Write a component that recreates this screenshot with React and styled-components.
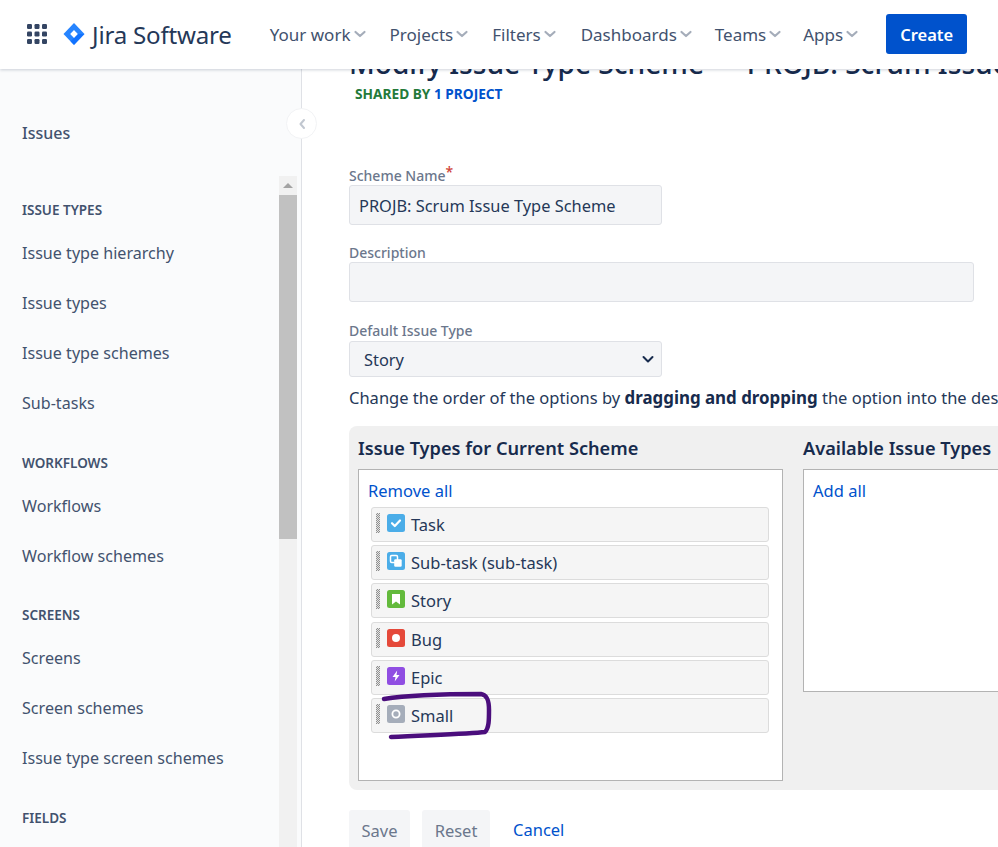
import React from "react";
import styled, { createGlobalStyle } from "styled-components";

const GlobalStyle = createGlobalStyle`
  html, body {
    margin: 0;
    padding: 0;
    height: 100%;
    overflow: hidden;
    background: #fff;
    font-family: "Noto Sans", "Open Sans", sans-serif;
    color: #172b4d;
  }
  * {
    box-sizing: border-box;
  }
`;

const Page = styled.div`
  width: 998px;
  height: 847px;
  display: flex;
  flex-direction: column;
  overflow: hidden;
`;

const Header = styled.header`
  position: relative;
  z-index: 2;
  flex: 0 0 69px;
  display: flex;
  align-items: center;
  padding: 0 0 1px 27px;
  background: #fff;
  box-shadow: 0 1px 3px rgba(9, 30, 66, 0.2);
`;

const Logo = styled.div`
  display: flex;
  align-items: center;
  margin-left: 16px;
  margin-right: 38px;
  gap: 7px;
`;

const LogoText = styled.span`
  font-size: 24.1px;
  color: #253858;
  letter-spacing: -0.2px;
`;

const NavItem = styled.div`
  display: flex;
  align-items: center;
  gap: 1px;
  margin-right: ${(p) => p.$gap}px;
  font-size: 17px;
  color: #42526e;
  white-space: nowrap;
`;

const CreateButton = styled.button`
  width: 81px;
  height: 40px;
  border: none;
  border-radius: 3px;
  background: #0052cc;
  color: #fff;
  font: 600 16.5px "Noto Sans", sans-serif;
`;

const Body = styled.div`
  flex: 1;
  display: flex;
  min-height: 0;
`;

const Sidebar = styled.aside`
  position: relative;
  flex: 0 0 302px;
  background: #fafbfc;
  border-right: 1px solid #dfe1e6;
  display: flex;
  flex-direction: column;
`;

const SidebarTitle = styled.div`
  flex: 0 0 107px;
  padding: 52px 0 0 22px;
  font-size: 16px;
  line-height: 24px;
  font-weight: 500;
  color: #42526e;
`;

const CollapseButton = styled.div`
  position: absolute;
  top: 39px;
  right: -16px;
  width: 31px;
  height: 31px;
  border-radius: 50%;
  background: #fff;
  border: 1px solid #f2f3f5;
  display: flex;
  align-items: center;
  justify-content: center;
  z-index: 1;
`;

const SideScroll = styled.div`
  flex: 1;
  display: flex;
  min-height: 0;
  padding-right: 4px;
`;

const NavList = styled.div`
  flex: 1;
  padding-left: 22px;
  overflow: hidden;
`;

const SectionTitle = styled.div`
  font-size: 13.5px;
  line-height: 18px;
  font-weight: 600;
  color: #42526e;
  margin-top: ${(p) => p.$top}px;
  margin-bottom: 22px;
`;

const SideLink = styled.div`
  font-size: 16.1px;
  line-height: 24px;
  height: 50px;
  color: #42526e;
`;

const ScrollTrack = styled.div`
  flex: 0 0 18px;
  background: #f1f1f1;
  display: flex;
  flex-direction: column;
  align-items: center;
`;

const ScrollArrow = styled.div`
  margin-top: 7px;
  width: 0;
  height: 0;
  border-left: 5px solid transparent;
  border-right: 5px solid transparent;
  border-bottom: 5px solid #a3a3a3;
`;

const ScrollThumb = styled.div`
  margin-top: 7px;
  width: 100%;
  height: 344px;
  background: #c1c1c1;
`;

const Main = styled.main`
  flex: 1;
  min-width: 0;
  padding-left: 47px;
  overflow: hidden;
`;

const Title = styled.h1`
  margin: -24px 0 0;
  font-size: 28.1px;
  line-height: 36px;
  font-weight: 500;
  color: #172b4d;
  white-space: pre;
`;

const SharedBy = styled.div`
  margin: 4px 0 0 6px;
  font-size: 13.7px;
  line-height: 18px;
  font-weight: 700;
  color: #247a3a;
`;

const SharedLink = styled.span`
  color: #0052cc;
`;

const Field = styled.div`
  margin-top: ${(p) => p.$top}px;
`;

const Label = styled.label`
  display: block;
  font-size: 14px;
  line-height: 16px;
  font-weight: 500;
  color: #6b778c;
  margin-bottom: ${(p) => p.$bottom}px;
`;

const Required = styled.span`
  color: #d04437;
  font-size: 14px;
  line-height: 0;
  vertical-align: 4px;
`;

const InputBox = styled.div`
  width: ${(p) => p.$width}px;
  height: ${(p) => p.$height}px;
  background: #f4f5f7;
  border: 1px solid #dfe1e6;
  border-radius: 3px;
  font-size: 16.4px;
  display: flex;
  align-items: center;
  justify-content: space-between;
  padding: 0 ${(p) => p.$right || 9}px 0 ${(p) => p.$left || 9}px;
  color: #253858;
`;

const HelpText = styled.p`
  margin: 9px 0 0;
  font-size: 16.5px;
  line-height: 24px;
  color: #253858;
  white-space: nowrap;
`;

const Strong = styled.b`
  font-size: 16.9px;
  color: #172b4d;
`;

const SchemePanel = styled.div`
  width: 680px;
  height: 364px;
  margin-top: 16px;
  padding: 9px;
  background: #f0f0f0;
  border-radius: 8px;
  display: flex;
  gap: 20px;
`;

const Column = styled.div`
  flex: 0 0 ${(p) => p.$width}px;
`;

const ColumnTitle = styled.h3`
  margin: 0 0 7px;
  font-size: 18.2px;
  line-height: 27px;
  font-weight: 600;
  color: #172b4d;
  white-space: nowrap;
`;

const DropBox = styled.div`
  position: relative;
  height: ${(p) => p.$height}px;
  background: #fff;
  border: 1px solid #b3b3b3;
  padding: 9px 13px 0 9px;
`;

const BoxLink = styled.a`
  display: block;
  font-size: 16.5px;
  line-height: 24px;
  color: #0052cc;
`;

const OptionList = styled.div`
  display: flex;
  flex-direction: column;
  gap: 3.2px;
  margin: 4px 0 0 3px;
`;

const Option = styled.div`
  height: 35px;
  display: flex;
  background: #f5f5f5;
  border: 1px solid #dcdcdc;
  border-radius: 3px;
  padding: 3px 0 0 4px;
  font-size: 16.5px;
  line-height: 28px;
  color: #253858;
`;

const Grip = styled.span`
  flex: 0 0 4px;
  height: 20px;
  margin: 2px 7px 0 0;
  background: repeating-conic-gradient(#8f8f8f 0 25%, #e4e4e4 0 50%) 0 0 / 2px 2px;
`;

const OptionIcon = styled.span`
  flex: 0 0 18px;
  height: 18px;
  margin: 3px 6px 0 0;
  display: flex;
`;

const Annotation = styled.svg`
  position: absolute;
  left: 0;
  top: 0;
  pointer-events: none;
`;

const Actions = styled.div`
  display: flex;
  align-items: flex-start;
  margin-top: 20px;
`;

const ActionButton = styled.div`
  width: ${(p) => p.$width}px;
  height: 40px;
  margin-right: 12px;
  background: #f4f5f7;
  border-radius: 3px;
  color: #6b778c;
  font-size: 16.5px;
  display: flex;
  align-items: center;
  justify-content: center;
`;

const CancelLink = styled.a`
  margin-left: 11px;
  font-size: 16.5px;
  line-height: 40px;
  color: #0052cc;
`;

const Chevron = () => (
  <svg width="16" height="16" viewBox="0 0 16 16" fill="none">
    <path d="M3.5 6l4.5 4 4.5-4" stroke="#a5adba" strokeWidth="2.2" strokeLinecap="round" strokeLinejoin="round" />
  </svg>
);

const AppGrid = () => (
  <svg width="20" height="20" viewBox="0 0 20 20" fill="#344563">
    {[0, 7.5, 15].map((y) =>
      [0, 7.5, 15].map((x) => <rect key={`${x}-${y}`} x={x} y={y} width="5" height="5" rx="1.2" />)
    )}
  </svg>
);

const JiraMark = () => (
  <svg width="22" height="24" viewBox="0 0 22 24">
    <path d="M11 1L21.5 12 11 23 .5 12z" fill="#2684ff" />
    <path d="M14.8 12L21.5 12 11 23 7.5 19.4z" fill="#0065ff" opacity="0.55" />
    <path d="M11 8l3.8 4-3.8 4-3.8-4z" fill="#fff" />
  </svg>
);

const IssueIcon = ({ bg, children }) => (
  <svg width="18" height="18" viewBox="0 0 18 18">
    <rect width="18" height="18" rx="2.5" fill={bg} />
    {children}
  </svg>
);

const issueTypes = [
  {
    name: "Task",
    icon: (
      <IssueIcon bg="#4bade8">
        <path d="M5 9.2l2.8 2.8L13 6.5" fill="none" stroke="#fff" strokeWidth="2.2" strokeLinecap="round" strokeLinejoin="round" />
      </IssueIcon>
    ),
  },
  {
    name: "Sub-task (sub-task)",
    icon: (
      <IssueIcon bg="#4bade8">
        <rect x="3.5" y="3.5" width="7" height="7" rx="1.2" fill="none" stroke="#fff" strokeWidth="1.5" />
        <rect x="7.2" y="7.2" width="7.5" height="7.5" rx="1.2" fill="#fff" />
      </IssueIcon>
    ),
  },
  {
    name: "Story",
    icon: (
      <IssueIcon bg="#63ba3c">
        <path d="M5 4h8v10.5l-4-3-4 3z" fill="#fff" />
      </IssueIcon>
    ),
  },
  {
    name: "Bug",
    icon: (
      <IssueIcon bg="#e5493a">
        <circle cx="9" cy="9" r="4" fill="#fff" />
      </IssueIcon>
    ),
  },
  {
    name: "Epic",
    icon: (
      <IssueIcon bg="#904ee2">
        <path d="M10.2 3.5L5.5 10h3l-.8 4.6L12.5 8h-3z" fill="#fff" />
      </IssueIcon>
    ),
  },
  {
    name: "Small",
    icon: (
      <IssueIcon bg="#a5adba">
        <circle cx="9" cy="9" r="3.6" fill="none" stroke="#fff" strokeWidth="1.8" />
      </IssueIcon>
    ),
  },
];

const navItems = [
  { label: "Your work", gap: 22 },
  { label: "Projects", gap: 22 },
  { label: "Filters", gap: 23 },
  { label: "Dashboards", gap: 21 },
  { label: "Teams", gap: 20 },
  { label: "Apps", gap: 26 },
];

const sideSections = [
  { title: "ISSUE TYPES", top: 25, links: ["Issue type hierarchy", "Issue types", "Issue type schemes", "Sub-tasks"] },
  { title: "WORKFLOWS", top: 13, links: ["Workflows", "Workflow schemes"] },
  { title: "SCREENS", top: 12, links: ["Screens", "Screen schemes", "Issue type screen schemes"] },
  { title: "FIELDS", top: 13, links: [] },
];

const App = () => {
  return (
    <Page>
      <GlobalStyle />
      <Header>
        <AppGrid />
        <Logo>
          <JiraMark />
          <LogoText>Jira Software</LogoText>
        </Logo>
        {navItems.map((item) => (
          <NavItem key={item.label} $gap={item.gap}>
            {item.label}
            <Chevron />
          </NavItem>
        ))}
        <CreateButton>Create</CreateButton>
      </Header>
      <Body>
        <Sidebar>
          <SidebarTitle>Issues</SidebarTitle>
          <CollapseButton>
            <svg width="10" height="12" viewBox="0 0 10 12" fill="none">
              <path d="M7 2L3.5 6 7 10" stroke="#c1c7d0" strokeWidth="2" strokeLinecap="round" strokeLinejoin="round" />
            </svg>
          </CollapseButton>
          <SideScroll>
            <NavList>
              {sideSections.map((section) => (
                <div key={section.title}>
                  <SectionTitle $top={section.top}>{section.title}</SectionTitle>
                  {section.links.map((link) => (
                    <SideLink key={link}>{link}</SideLink>
                  ))}
                </div>
              ))}
            </NavList>
            <ScrollTrack>
              <ScrollArrow />
              <ScrollThumb />
            </ScrollTrack>
          </SideScroll>
        </Sidebar>
        <Main>
          <Title>Modify Issue Type Scheme — PROJB: Scrum Issue Type Scheme</Title>
          <SharedBy>
            SHARED BY <SharedLink>1 PROJECT</SharedLink>
          </SharedBy>
          <Field $top={65}>
            <Label $bottom={1}>
              Scheme Name<Required>*</Required>
            </Label>
            <InputBox $width={313} $height={40}>PROJB: Scrum Issue Type Scheme</InputBox>
          </Field>
          <Field $top={20}>
            <Label $bottom={1}>Description</Label>
            <InputBox $width={625} $height={40} />
          </Field>
          <Field $top={21}>
            <Label $bottom={2}>Default Issue Type</Label>
            <InputBox $width={313} $height={36} $left={14} $right={6}>
              Story
              <svg width="14" height="14" viewBox="0 0 14 14" fill="none">
                <path d="M2.5 5L7 9.5 11.5 5" stroke="#172b4d" strokeWidth="2" strokeLinecap="round" strokeLinejoin="round" />
              </svg>
            </InputBox>
          </Field>
          <HelpText>
            Change the order of the options by <Strong>dragging and dropping</Strong> the option into the desired order.
          </HelpText>
          <SchemePanel>
            <Column $width={425}>
              <ColumnTitle>Issue Types for Current Scheme</ColumnTitle>
              <DropBox $height={312}>
                <BoxLink>Remove all</BoxLink>
                <OptionList>
                  {issueTypes.map((issue) => (
                    <Option key={issue.name}>
                      <Grip />
                      <OptionIcon>{issue.icon}</OptionIcon>
                      {issue.name}
                    </Option>
                  ))}
                </OptionList>
                <Annotation width="425" height="312" viewBox="0 0 425 312" fill="none">
                  <path
                    d="M25 229C50 225 80 224 122 224C128 225 130 230 130 240C130 250 130 258 126 262C110 264 70 265 32 267"
                    stroke="#4b0e7d"
                    strokeWidth="4.5"
                    strokeLinecap="round"
                    strokeLinejoin="round"
                  />
                </Annotation>
              </DropBox>
            </Column>
            <Column $width={300}>
              <ColumnTitle>Available Issue Types</ColumnTitle>
              <DropBox $height={223}>
                <BoxLink>Add all</BoxLink>
              </DropBox>
            </Column>
          </SchemePanel>
          <Actions>
            <ActionButton $width={61}>Save</ActionButton>
            <ActionButton $width={68}>Reset</ActionButton>
            <CancelLink>Cancel</CancelLink>
          </Actions>
        </Main>
      </Body>
    </Page>
  );
};

export default App;
